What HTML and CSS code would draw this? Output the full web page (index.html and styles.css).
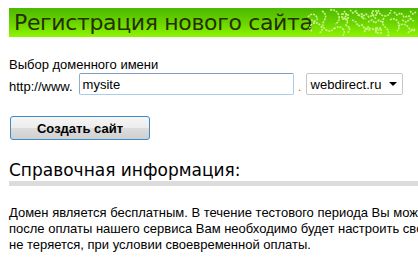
FILE: index.html
```html
<!DOCTYPE html>
<html lang="ru">
<head>
<meta charset="utf-8">
<link rel="stylesheet" href="styles.css">
</head>
<body>
<div class="page">
  <div class="banner">
    <h1 class="banner-title">Регистрация нового сайта</h1>
    <svg class="banner-ornament" width="112" height="29" viewBox="0 0 112 29" fill="none" stroke="#cdf58c" stroke-width="1.6" stroke-dasharray="2 1">
      <path d="M2 9 q4 -5 8 -1 q3 3 -1 5 q-4 1 -3 -3"/>
      <path d="M6 23 q-4 -3 0 -7 q5 -3 9 2 q3 5 -2 7"/>
      <path d="M16 3 q6 4 2 10 q-3 5 2 9 q5 3 8 -2"/>
      <path d="M24 2 q7 -1 9 6 q1 6 -4 8"/>
      <path d="M28 21 q5 -4 9 0 q3 4 -1 7"/>
      <path d="M36 6 h6 v5 h-6 z"/>
      <path d="M38 3 l3 4 l-3 3 l4 3 l-2 4 l4 3 l-2 5"/>
      <path d="M44 2 l3 3 l3 -2 l2 4 l4 -1 l0 4 l4 1"/>
      <path d="M46 12 l4 2 l2 4 l4 -1 l3 4 l3 -2 l2 5"/>
      <path d="M52 7 l4 2 l4 -3 l3 3 l4 -2 l3 4"/>
      <path d="M62 14 l4 -2 l3 3 l4 -3 l4 3"/>
      <path d="M58 24 q4 -5 9 -3 q4 3 8 -1"/>
      <path d="M66 3 h5 v4 h-5 z"/>
      <path d="M72 2 q2 6 7 6 q5 0 6 -6"/>
      <path d="M78 10 q-3 5 1 9 q5 4 3 9"/>
      <path d="M84 12 q5 -3 8 2 q3 5 -1 9"/>
      <path d="M88 4 l3 3 l4 -2 l3 4 l5 -1 l2 4"/>
      <path d="M92 18 q6 -4 10 1 q3 4 7 2"/>
      <path d="M96 12 l4 2 l5 -3 l4 3"/>
      <path d="M102 25 q3 -4 8 -2"/>
      <path d="M104 3 l3 3 l3 -2"/>
      <path d="M70 20 h5 v5 h-5 z"/>
    </svg>
  </div>

  <form class="domain-form">
    <label class="field-label" for="site">Выбор доменного имени</label>
    <div class="domain-row">
      <span class="prefix">http://www.</span>
      <input class="site-input" id="site" type="text" value="mysite">
      <span class="dot">.</span>
      <div class="zone-select">
        <span class="zone-value">webdirect.ru</span>
        <svg class="zone-arrow" width="8" height="4" viewBox="0 0 8 4"><path d="M0 0 H8 L4 4 Z" fill="#000"/></svg>
      </div>
    </div>
    <button class="create-btn" type="button">Создать сайт</button>
  </form>

  <h2 class="info-title">Справочная информация:</h2>
  <p class="info-text">Домен является бесплатным. В течение тестового периода Вы можете<br>после оплаты нашего сервиса Вам необходимо будет настроить свой<br>не теряется, при условии своевременной оплаты.</p>
</div>
</body>
</html>
```
FILE: styles.css
```css
html, body {
  margin: 0;
  padding: 0;
  background: #fff;
  overflow: hidden;
}
body {
  padding: 8px 0 0 9px;
  font-family: "Liberation Sans", Arial, sans-serif;
  font-size: 13px;
  color: #000;
}
.page {
  width: 409px;
}
.banner {
  width: 409px;
  height: 29px;
  background: linear-gradient(to bottom, #4cb800 0%, #6ad400 50%, #8ef500 100%);
  display: flex;
  align-items: center;
  position: relative;
  overflow: hidden;
}
.banner-title {
  margin: 0 0 0 5px;
  font-family: "DejaVu Sans", Verdana, sans-serif;
  font-weight: normal;
  font-size: 22px;
  letter-spacing: -0.35px;
  line-height: 29px;
  color: #253000;
  white-space: nowrap;
}
.banner-ornament {
  position: absolute;
  right: 0;
  top: 0;
}
.domain-form {
  display: flex;
  flex-direction: column;
  align-items: flex-start;
}
.field-label {
  margin-top: 20px;
  line-height: 15px;
  font-size: 13px;
}
.domain-row {
  display: flex;
  align-items: center;
  margin-top: 1px;
}
.prefix {
  font-size: 13px;
  margin-right: 6px;
  padding-top: 4px;
}
.site-input {
  box-sizing: border-box;
  width: 215px;
  height: 22px;
  border: 1px solid #a9cde6;
  border-top-color: #7a9fc2;
  border-left-color: #8cb0cf;
  border-radius: 2px;
  padding: 0 3px;
  font-family: "Liberation Sans", Arial, sans-serif;
  font-size: 13px;
  color: #000;
  outline: none;
}
.dot {
  width: 12px;
  text-align: center;
  color: #c07000;
  font-size: 12px;
  padding-top: 6px;
}
.zone-select {
  box-sizing: border-box;
  width: 97px;
  height: 22px;
  border: 1px solid #c6c6c6;
  border-radius: 2px;
  display: flex;
  align-items: center;
  justify-content: space-between;
  padding: 0 5px 0 4px;
  font-size: 13px;
}
.create-btn {
  box-sizing: border-box;
  margin: 21px 0 0 1px;
  width: 140px;
  height: 24px;
  border: 1px solid #3d8bc4;
  border-radius: 3px;
  background: linear-gradient(to bottom, #f6f6f6 0%, #ececec 50%, #dcdcdc 51%, #d0d0d0 100%);
  font-family: "Liberation Sans", Arial, sans-serif;
  font-weight: bold;
  font-size: 13px;
  color: #000;
  padding: 0;
}
.info-title {
  margin: 19px 0 0 0;
  width: 409px;
  font-family: "DejaVu Sans", Verdana, sans-serif;
  font-weight: normal;
  font-size: 17px;
  line-height: 22px;
  border-bottom: 5px solid #dcdcdc;
}
.info-text {
  margin: 19px 0 0 0;
  font-size: 13px;
  line-height: 16px;
  white-space: nowrap;
}
```
